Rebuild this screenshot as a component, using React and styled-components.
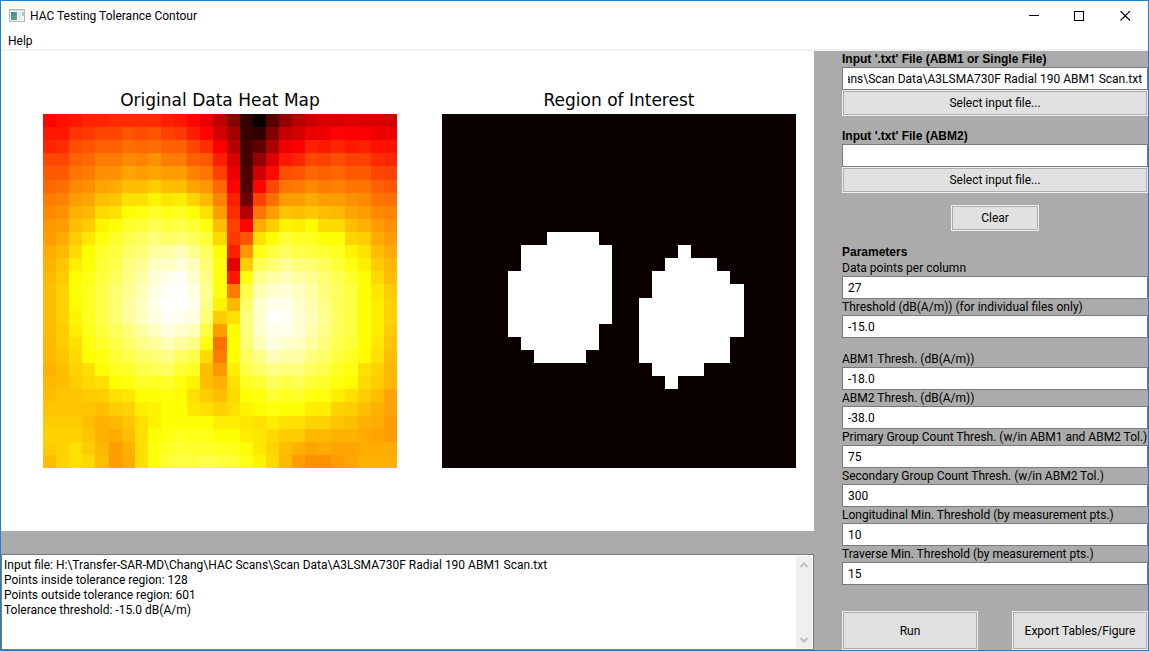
import React, { useEffect, useRef } from "react";
import styled, { createGlobalStyle } from "styled-components";

const GlobalStyle = createGlobalStyle`
  *, *::before, *::after { box-sizing: border-box; }
  body { margin: 0; background: #fff; }
  body, button, input, textarea {
    font-family: Roboto, "Open Sans", "Liberation Sans", sans-serif;
    font-size: 12px;
    line-height: 16px;
    color: #000;
  }
`;

const Window = styled.div`
  display: flex;
  flex-direction: column;
  min-height: 100vh;
  border: 1px solid #1b80d3;
  background: #fff;
`;

const TitleBar = styled.header`
  display: flex;
  align-items: center;
  height: 30px;
  padding-left: 8px;
`;

const WindowTitle = styled.h1`
  flex: 1;
  margin: 0 0 0 5px;
  font-size: 12px;
  line-height: 16px;
  font-weight: 400;
`;

const CaptionButton = styled.button`
  display: flex;
  align-items: center;
  justify-content: center;
  width: 46px;
  height: 30px;
  padding: 0;
  border: 0;
  background: transparent;
`;

const MenuBar = styled.nav`
  display: flex;
  align-items: flex-end;
  height: 20px;
  border-bottom: 2px solid #f0f0f0;
`;

const MenuItem = styled.button`
  padding: 0 7px;
  border: 0;
  background: transparent;
`;

const Workspace = styled.main`
  display: flex;
  flex: 1;
  background: #ababab;
`;

const Results = styled.div`
  display: flex;
  flex: 1;
  flex-direction: column;
  gap: 23px;
  min-width: 0;
`;

const Figure = styled.section`
  display: flex;
  gap: 45px;
  padding: 37px 18px 63px 42px;
  background: #fff;
`;

const Plot = styled.figure`
  display: flex;
  flex: 1;
  flex-direction: column;
  gap: 2px;
  margin: 0;
`;

const PlotTitle = styled.figcaption`
  font-family: "DejaVu Sans", sans-serif;
  font-size: 17px;
  line-height: 24px;
  text-align: center;
`;

const Raster = styled.svg`
  display: block;
  width: 100%;
  aspect-ratio: 1;
  background: ${(p) => p.$fill || "transparent"};
`;

const LogBox = styled.section`
  display: flex;
  flex: 1;
  min-height: 96px;
  padding: 1px;
  border: 1px solid #7a7a7a;
  background: #fff;
`;

const LogText = styled.textarea`
  flex: 1;
  min-width: 0;
  padding: 2px 1px;
  border: 0;
  outline: 0;
  resize: none;
  overflow: hidden;
  background: #fff;
  line-height: 15px;
`;

const ScrollTrack = styled.div`
  display: flex;
  flex-direction: column;
  justify-content: space-between;
  width: 16px;
  background: #f0f0f0;
`;

const ScrollButton = styled.button`
  display: flex;
  align-items: center;
  justify-content: center;
  height: 17px;
  padding: 0;
  border: 0;
  background: transparent;
`;

const Sidebar = styled.form`
  display: flex;
  flex-direction: column;
  width: 334px;
  padding-left: 28px;
`;

const Group = styled.fieldset`
  display: flex;
  flex-direction: column;
  min-width: 0;
  margin: 0 0 ${(p) => p.$after || 0}px;
  padding: 0;
  border: 0;
`;

const Heading = styled.label`
  padding: 0;
  font-family: "Liberation Sans", Arial, sans-serif;
  font-size: 12px;
  line-height: 16px;
  font-weight: 700;
`;

const FieldLabel = styled.label`
  line-height: 16px;
  white-space: nowrap;
`;

const TextField = styled.input`
  width: 100%;
  height: 23px;
  padding: 0 5px;
  border: 1px solid #7a7a7a;
  border-radius: 0;
  outline: 0;
  background: #fff;
`;

const PushButton = styled.button`
  width: ${(p) => p.$width || "100%"};
  height: ${(p) => (p.$tall ? 39 : 26)}px;
  padding: 0;
  border: 1px solid #f0f0f0;
  box-shadow: inset 0 0 0 1px #adadad;
  background: #e1e1e1;
`;

const ClearRow = styled.div`
  display: flex;
  justify-content: center;
  margin-bottom: 13px;
`;

const Actions = styled.div`
  display: flex;
  justify-content: space-between;
  margin-top: auto;
`;

const HEAT = `
37 39 40 42 42 43 43 43 43 41 40 37 33 27 19 6 0 12 21 26 29 31 31 32 31 31 30
40 40 44 45 47 47 49 48 49 46 45 41 37 30 23 7 6 18 28 30 34 34 37 36 36 34 34
42 43 48 49 51 51 53 52 53 51 51 47 43 36 26 9 13 24 34 36 41 40 42 40 41 39 39
47 47 51 52 55 55 57 56 58 55 55 51 50 41 31 9 21 31 40 42 47 46 48 46 46 43 42
50 50 54 55 58 58 61 60 61 60 60 56 54 46 34 10 29 38 48 49 52 51 52 50 50 47 46
52 53 57 58 61 62 65 65 67 65 65 61 59 52 37 11 37 47 54 55 57 55 56 54 54 51 50
55 56 60 61 65 66 70 70 73 71 72 68 64 56 41 15 46 53 60 60 62 60 60 58 57 54 53
57 58 63 64 69 70 75 76 79 77 78 75 70 60 43 25 54 60 66 65 66 65 64 61 60 57 56
59 60 65 67 73 75 79 80 83 81 82 80 76 65 46 37 62 67 73 72 74 69 69 65 63 60 58
60 62 67 71 76 79 82 84 87 85 86 84 80 69 45 49 70 75 80 78 78 75 75 68 67 62 60
62 64 69 75 79 81 85 86 90 91 93 89 84 75 41 59 77 81 84 82 81 80 78 73 70 65 62
63 66 72 75 80 82 87 89 94 94 96 93 86 76 32 67 83 86 89 87 86 83 80 76 72 67 64
64 67 75 77 81 84 88 91 96 98 99 95 88 76 40 76 89 91 93 91 89 86 83 79 75 69 65
65 68 75 78 82 86 89 93 97 99 100 97 89 76 55 82 92 95 96 94 91 87 84 81 75 71 67
65 68 74 78 82 86 90 94 98 100 100 98 88 73 64 85 95 98 98 95 92 88 84 81 75 72 68
65 68 73 78 82 86 90 94 97 99 98 97 86 67 70 87 95 100 99 96 93 89 84 81 75 72 68
65 67 72 77 81 84 87 91 94 97 95 93 81 60 75 87 95 98 98 96 92 88 84 81 75 72 67
64 67 70 76 79 82 85 88 90 93 90 88 76 53 75 86 93 97 95 94 90 87 83 80 75 71 66
64 66 69 75 76 80 82 85 86 88 84 82 69 55 75 84 88 93 91 91 87 85 81 78 74 70 65
63 65 68 70 74 78 79 82 83 84 80 78 65 59 72 82 85 88 87 87 84 82 78 76 70 68 64
64 65 67 69 70 75 76 79 78 79 76 73 65 63 70 78 80 84 82 83 80 79 76 74 69 67 64
65 66 66 67 67 70 71 75 75 76 74 70 67 65 69 75 76 80 78 79 76 76 72 70 67 65 61
66 66 66 66 65 67 68 72 73 75 75 71 70 68 70 73 74 76 75 75 72 72 68 67 65 63 61
67 67 67 65 63 64 66 70 73 75 75 75 75 72 72 71 70 72 70 70 68 68 66 65 63 62 60
68 68 68 66 63 62 65 70 75 76 78 77 77 75 75 72 71 69 67 67 64 64 63 63 62 61 60
67 68 70 67 64 60 63 70 76 78 80 79 79 78 77 75 71 68 65 63 61 62 61 61 62 62 62
65 68 70 69 65 60 62 70 76 80 81 81 82 81 80 77 73 69 64 60 58 58 60 61 63 63 63
`
  .trim()
  .split("\n")
  .map((row) => row.split(" ").map(Number));

/* Region of interest: [row, first column, cell count] */
const REGION = [
  [9, 8, 4], [10, 6, 7], [11, 6, 7], [12, 5, 8], [13, 5, 8], [14, 5, 8],
  [15, 5, 8], [16, 5, 7], [17, 6, 6], [18, 7, 4],
  [10, 18, 1], [11, 17, 4], [12, 16, 6], [13, 16, 7], [14, 15, 8],
  [15, 15, 8], [16, 15, 8], [17, 15, 7], [18, 15, 7], [19, 16, 4], [20, 17, 1],
];

/* Black - red - yellow - white colour scale for a level of 0 to 100 */
function hot(level) {
  const v = level / 100;
  const channel = (x) => Math.round(255 * Math.min(1, Math.max(0, x)));
  const r = channel(0.0416 + (v / 0.365) * 0.9584);
  const g = channel((v - 0.365) / 0.381);
  const b = channel((v - 0.746) / 0.254);
  return `rgb(${r},${g},${b})`;
}

const INPUT_FILE =
  "H:\\Transfer-SAR-MD\\Chang\\HAC Scans\\Scan Data\\A3LSMA730F Radial 190 ABM1 Scan.txt";

const LOG = [
  `Input file: ${INPUT_FILE}`,
  "Points inside tolerance region: 128",
  "Points outside tolerance region: 601",
  "Tolerance threshold: -15.0 dB(A/m)",
].join("\n");

function Field({ id, label, value }) {
  return (
    <>
      <FieldLabel htmlFor={id}>{label}</FieldLabel>
      <TextField id={id} type="text" defaultValue={value} />
    </>
  );
}

function FilePicker({ id, label, value }) {
  const field = useRef(null);
  useEffect(() => {
    field.current.scrollLeft = field.current.scrollWidth;
  }, []);
  return (
    <Group $after={12}>
      <Heading htmlFor={id}>{label}</Heading>
      <TextField id={id} ref={field} type="text" defaultValue={value} />
      <PushButton type="button">Select input file...</PushButton>
    </Group>
  );
}

function AppIcon() {
  return (
    <svg width="16" height="14" viewBox="0 0 16 14" aria-hidden="true">
      <defs>
        <linearGradient id="pane" x1="0" y1="0" x2="1" y2="1">
          <stop offset="0" stopColor="#4a7fa0" />
          <stop offset="1" stopColor="#5fae7c" />
        </linearGradient>
      </defs>
      <rect x="0.5" y="0.5" width="15" height="12" fill="#f4f4f4" stroke="#b4b8bc" />
      <rect x="1" y="1" width="14" height="1" fill="#d8dce0" />
      <rect x="2" y="3" width="6" height="8" fill="url(#pane)" />
      <rect x="9" y="3" width="3" height="8" fill="#e2e6ea" />
      <rect x="13" y="3" width="2" height="4" fill="#a9c9b0" />
    </svg>
  );
}

export default function App() {
  return (
    <>
      <GlobalStyle />
      <Window>
        <TitleBar>
          <AppIcon />
          <WindowTitle>HAC Testing Tolerance Contour</WindowTitle>
          <CaptionButton type="button" aria-label="Minimize">
            <svg width="11" height="11" shapeRendering="crispEdges">
              <rect x="1" y="4" width="10" height="1" />
            </svg>
          </CaptionButton>
          <CaptionButton type="button" aria-label="Maximize">
            <svg width="11" height="11" shapeRendering="crispEdges">
              <rect x="0.5" y="0.5" width="9" height="9" fill="none" stroke="#000" />
            </svg>
          </CaptionButton>
          <CaptionButton type="button" aria-label="Close">
            <svg width="11" height="11">
              <path d="M0.5 0L10 9.5M10 0L0.5 9.5" stroke="#000" strokeWidth="1.1" />
            </svg>
          </CaptionButton>
        </TitleBar>
        <MenuBar>
          <MenuItem type="button">Help</MenuItem>
        </MenuBar>
        <Workspace>
          <Results>
            <Figure>
              <Plot>
                <PlotTitle>Original Data Heat Map</PlotTitle>
                <Raster viewBox="0 0 27 27" shapeRendering="crispEdges">
                  {HEAT.map((row, y) =>
                    row.map((level, x) => (
                      <rect key={`${x}-${y}`} x={x} y={y} width="1" height="1" fill={hot(level)} />
                    ))
                  )}
                </Raster>
              </Plot>
              <Plot>
                <PlotTitle>Region of Interest</PlotTitle>
                <Raster viewBox="0 0 27 27" shapeRendering="crispEdges" $fill="#0a0000">
                  {REGION.map(([y, x, count]) => (
                    <rect key={`${x}-${y}`} x={x} y={y} width={count} height="1" fill="#fff" />
                  ))}
                </Raster>
              </Plot>
            </Figure>
            <LogBox>
              <LogText readOnly aria-label="Log" defaultValue={LOG} />
              <ScrollTrack>
                <ScrollButton type="button" aria-label="Scroll up">
                  <svg width="8" height="6" fill="none" stroke="#bfbfbf" strokeWidth="2">
                    <path d="M0.5 5L4 1.5L7.5 5" />
                  </svg>
                </ScrollButton>
                <ScrollButton type="button" aria-label="Scroll down">
                  <svg width="8" height="6" fill="none" stroke="#bfbfbf" strokeWidth="2">
                    <path d="M0.5 1L4 4.5L7.5 1" />
                  </svg>
                </ScrollButton>
              </ScrollTrack>
            </LogBox>
          </Results>
          <Sidebar>
            <FilePicker id="abm1-file" label="Input '.txt' File (ABM1 or Single File)" value={INPUT_FILE} />
            <FilePicker id="abm2-file" label="Input '.txt' File (ABM2)" value="" />
            <ClearRow>
              <PushButton type="button" $width="88px">Clear</PushButton>
            </ClearRow>
            <Group $after={13}>
              <Heading as="legend">Parameters</Heading>
              <Field id="points" label="Data points per column" value="27" />
              <Field id="threshold" label="Threshold (dB(A/m)) (for individual files only)" value="-15.0" />
            </Group>
            <Group $after={26}>
              <Field id="abm1" label="ABM1 Thresh. (dB(A/m))" value="-18.0" />
              <Field id="abm2" label="ABM2 Thresh. (dB(A/m))" value="-38.0" />
              <Field id="primary" label="Primary Group Count Thresh. (w/in ABM1 and ABM2 Tol.)" value="75" />
              <Field id="secondary" label="Secondary Group Count Thresh. (w/in ABM2 Tol.)" value="300" />
              <Field id="longitudinal" label="Longitudinal Min. Threshold (by measurement pts.)" value="10" />
              <Field id="traverse" label="Traverse Min. Threshold (by measurement pts.)" value="15" />
            </Group>
            <Actions>
              <PushButton type="button" $width="136px" $tall>Run</PushButton>
              <PushButton type="button" $width="136px" $tall>Export Tables/Figure</PushButton>
            </Actions>
          </Sidebar>
        </Workspace>
      </Window>
    </>
  );
}
